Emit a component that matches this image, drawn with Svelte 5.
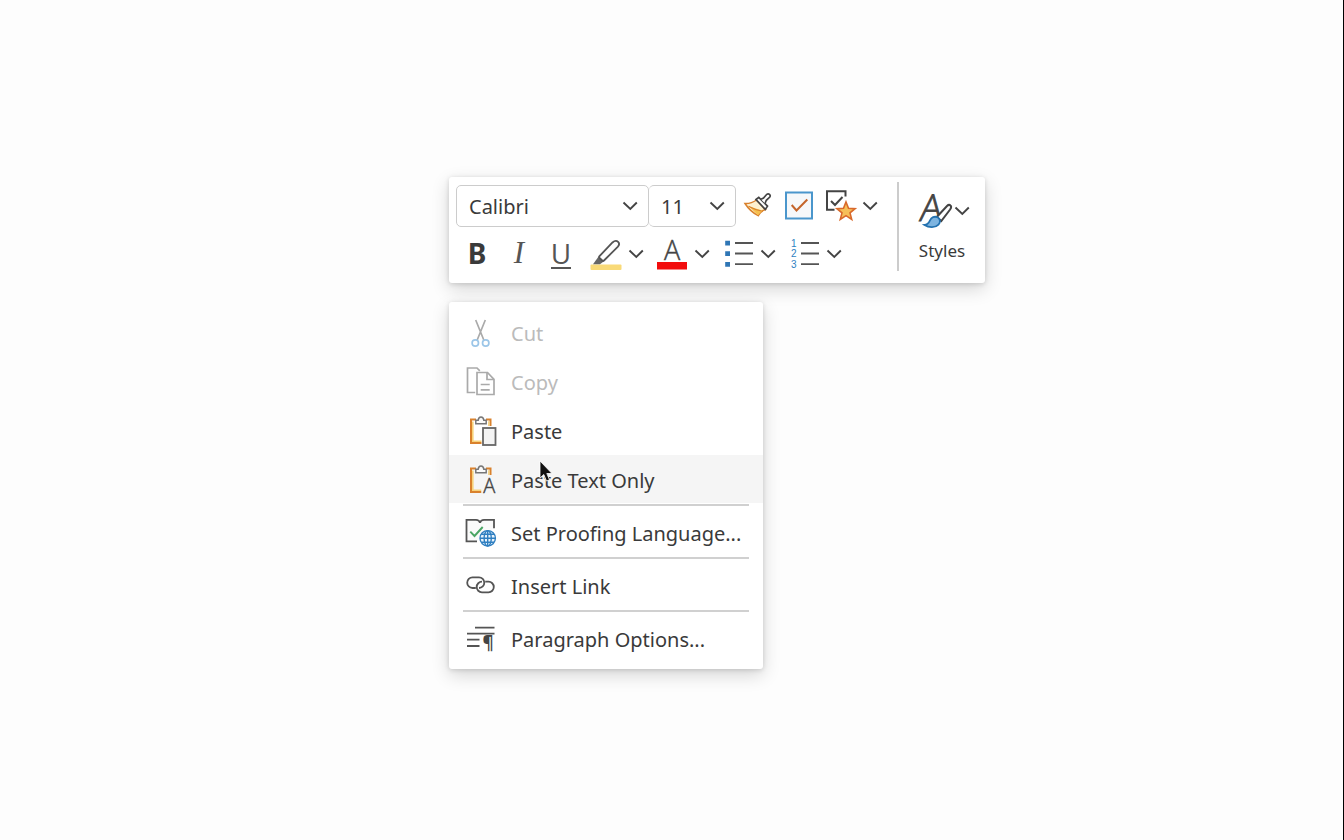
<script>
  let font = $state('Calibri');
  let size = $state('11');
</script>

{#snippet chevron()}
  <svg class="chev" viewBox="0 0 16 10" aria-hidden="true"><path d="M1.500 1.500 8.300 8l6.500-6.500" /></svg>
{/snippet}

{#snippet clipboard()}
  <g class="board">
    <path d="M11 4.500H6V28h10.500" stroke="#d9812d" stroke-width="2" />
    <path d="M7.800 6.500V26.200h8.700" stroke="#f7d27a" stroke-width="1.600" />
    <path d="M21 4.500h4.500V11" stroke="#d9812d" stroke-width="2" />
    <path d="M23.800 6.300V11" stroke="#f7d27a" stroke-width="1.400" />
    <path d="M10.800 8.800V5.200h2.400c.2-2 1.300-3.200 2.800-3.200s2.600 1.200 2.800 3.200h2.400v3.600z" fill="#fafafa" stroke="#777" stroke-width="1.500" />
  </g>
{/snippet}

<main class="page">
  <div class="toolbar" role="toolbar" aria-label="Formatting">
    <div class="tools">
      <div class="line">
        <div class="field font">
          <select aria-label="Font" bind:value={font}>
            <option>Calibri</option>
            <option>Arial</option>
          </select>
          {@render chevron()}
        </div>
        <div class="field size">
          <select aria-label="Font size" bind:value={size}>
            <option>11</option>
            <option>12</option>
          </select>
          {@render chevron()}
        </div>
        <div class="icons">
          <button aria-label="Format painter">
            <svg class="icon" viewBox="0 0 32 32">
              <path d="M3 13.500c4.500.2 8-1 11.500-3.500L23.500 19.500c-3.200 1-6 3.300-7.300 6.200C11.500 23.200 6.500 19 3 13.500z" fill="#fdf0cf" stroke="#d9812d" stroke-width="1.500" />
              <path d="M7 16.500 20.500 20.500l-4.500 4.800z" fill="#f6c04e" />
              <path d="M6.500 16.200c4 2.200 8.500 4 13 4.800" stroke="#d9812d" stroke-width="1.200" />
              <path d="M14 9.500l2.800-2.200 8.700 8.900-2.200 3.200z" fill="#fff" stroke="#444" stroke-width="1.700" />
              <path d="M19 9.300l2.500-1.300 3.300-3.700c1.800-1.400 4.300.6 3 2.700l-3.500 3.300-1.300 3.200" fill="#fff" stroke="#444" stroke-width="1.700" />
            </svg>
          </button>
          <button aria-label="Check box">
            <svg class="icon" viewBox="0 0 32 32">
              <rect x="3" y="2.500" width="26" height="26" fill="#f6f8fa" stroke="#4a96cc" stroke-width="2" />
              <path d="M8.700 15l4.800 5.500L24.300 9.500" stroke="#c4652b" stroke-width="2" />
            </svg>
          </button>
          <div class="split">
            <button aria-label="Favorite tag">
              <svg class="icon" viewBox="0 0 32 32">
                <path d="M21.500 6.500V1.200H3v18.600h7.500" stroke="#444" stroke-width="2" />
                <path d="M7 11l4 4 7.500-8" stroke="#444" stroke-width="2" />
                <path d="M22 12l2.500 6.300 6.600.4-5.100 4.200 1.700 6.500L22 25.700l-5.700 3.700 1.700-6.500-5.100-4.200 6.600-.4z" fill="#f6bf58" stroke="#d9692b" stroke-width="1.600" />
              </svg>
            </button>
            <button class="more" aria-label="More tags">{@render chevron()}</button>
          </div>
        </div>
      </div>

      <div class="line second">
        <button class="letter bold">B</button>
        <button class="letter italic">I</button>
        <button class="letter under"><span>U</span></button>
        <div class="splits">
          <div class="split">
            <button aria-label="Highlight">
              <svg class="icon" viewBox="0 0 32 32">
                <rect x="0.500" y="26.500" width="31" height="5.500" rx="1" fill="#f9da78" />
                <path d="M3 26.200l5.600-7.700 5 5-3.600 2.700z" fill="#666" />
                <path d="M9.500 18.200L22.500 4.500c2.200-2 4.300-1.900 5.600-.6 1.300 1.300 1.300 3.200-.4 5L14 22.500c-.5.500-1.300.5-1.800 0l-2.700-2.600c-.5-.5-.5-1.100 0-1.700z" fill="#fff" stroke="#555" stroke-width="1.800" />
              </svg>
            </button>
            <button class="more" aria-label="Highlight colors">{@render chevron()}</button>
          </div>
          <div class="split">
            <button aria-label="Font color">
              <svg class="icon" viewBox="0 0 32 32">
                <text class="thin" x="16" y="22" font-size="27" text-anchor="middle">A</text>
                <rect x="1" y="24" width="30" height="7.500" fill="#f20d0d" />
              </svg>
            </button>
            <button class="more" aria-label="Font colors">{@render chevron()}</button>
          </div>
          <div class="split">
            <button aria-label="Bullets">
              <svg class="icon" viewBox="0 0 32 32">
                <path d="M3.200 2.800h4.800v4.800H3.200zM3.200 13.300h4.800v4.800H3.200zM3.200 24h4.800v4.800H3.200z" fill="#2f76b5" />
                <path d="M13 5h18M13 15.500h18M13 26.200h18" stroke="#555" stroke-width="1.800" />
              </svg>
            </button>
            <button class="more" aria-label="Bullet styles">{@render chevron()}</button>
          </div>
          <div class="split">
            <button aria-label="Numbering">
              <svg class="icon" viewBox="0 0 32 32">
                <g class="digits"><text x="3" y="8.500">1</text><text x="3" y="19.300">2</text><text x="3" y="30">3</text></g>
                <path d="M13 5h18M13 15.500h18M13 26.200h18" stroke="#555" stroke-width="1.800" />
              </svg>
            </button>
            <button class="more" aria-label="Numbering styles">{@render chevron()}</button>
          </div>
        </div>
      </div>
    </div>

    <button class="styles">
      <span class="stylesicon">
        <svg viewBox="0 0 36 36" aria-hidden="true">
          <text class="thin heavy" transform="skewX(-6)" x="8" y="28" font-size="37">A</text>
          <path d="M36.500 12.500c1.200 1 .6 2.500-.4 4L27.300 28l-4.500-4L33 13c1.200-1.200 2.500-1.400 3.500-.5z" fill="#fff" stroke="#444" stroke-width="2" />
          <path d="M10.500 32c3.500-.3 4.200-2 5.500-4.700 1.300-2.800 4.500-4.500 7.500-3 3 1.600 3.200 5 1 7.300-3.200 3.300-9.500 3.300-14 .4z" fill="#7db4e0" stroke="#2472b0" stroke-width="1.800" />
        </svg>
        {@render chevron()}
      </span>
      <span>Styles</span>
    </button>
  </div>

  <div class="menu" role="menu">
    <button role="menuitem" disabled>
      <svg class="icon" viewBox="0 0 32 32">
        <path d="M10.700 3l8.300 20.500M20.300 3L12 23.500" stroke="#aaa" stroke-width="1.700" />
        <circle cx="10.300" cy="26" r="3.200" stroke="#9cc6e8" stroke-width="1.700" />
        <circle cx="20.700" cy="26" r="3.200" stroke="#9cc6e8" stroke-width="1.700" />
      </svg>
      Cut
    </button>
    <button role="menuitem" disabled>
      <svg class="icon" viewBox="0 0 32 32" stroke="#aaa" stroke-width="1.700">
        <path d="M14.800 4.800L12 2H2.500v24.500h7.700" />
        <path d="M12 6.500h10.500l6.500 6.800v15.200H12z" />
        <path d="M22 6.500v7h7M15.700 18.500h9M15.700 23.800h9" />
      </svg>
      Copy
    </button>
    <button role="menuitem">
      <svg class="icon" viewBox="0 0 32 32">
        {@render clipboard()}
        <rect x="18" y="13" width="12.500" height="17" fill="#f4f4f4" stroke="#666" stroke-width="1.800" />
      </svg>
      Paste
    </button>
    <button role="menuitem" class="active">
      <svg class="icon" viewBox="0 0 32 32">
        {@render clipboard()}
        <rect x="16.500" y="13" width="14" height="17" fill="#f5f5f5" />
        <text class="thin" x="24.200" y="29" font-size="20" text-anchor="middle">A</text>
      </svg>
      Paste Text Only
      <svg class="cursor" viewBox="0 0 14 24" aria-hidden="true">
        <path d="M1 1v17l3.800-3.500L7.500 21l3-1.200-2.700-6.300H13z" fill="#111" stroke="#fff" stroke-width="0.800" />
      </svg>
    </button>
    <hr />
    <button role="menuitem">
      <svg class="icon" viewBox="0 0 32 32">
        <path d="M12 24.300H1.500V2.800H11c2.200 0 3.500 1 4 3 .5-2 1.800-3 4-3h10v8.500" fill="#fafafa" stroke="#555" stroke-width="1.800" />
        <path d="M5.300 14.700l4.200 4.300 8.200-9" stroke="#4aa564" stroke-width="1.900" />
        <circle cx="22.700" cy="21.300" r="8.700" fill="#fff" />
        <g stroke="#2f7fc1" stroke-width="1.400">
          <circle cx="22.700" cy="21.300" r="7.700" fill="#e8f3fb" />
          <ellipse cx="22.700" cy="21.300" rx="3.600" ry="7.700" />
          <path d="M22.700 13.600V29M15 21.300h15.400M16.300 17.300h12.800M16.300 25.300h12.800" />
        </g>
      </svg>
      Set Proofing Language...
    </button>
    <hr />
    <button role="menuitem">
      <svg class="icon" viewBox="0 0 32 32" stroke="#555" stroke-width="1.800">
        <path d="M10.800 18H7.500a5.300 5.300 0 0 1 0-10.600H14a5.300 5.300 0 0 1 0 10.600" />
        <path d="M20.200 11.700h3.300a5.300 5.300 0 0 1 0 10.600H17a5.300 5.300 0 0 1 0-10.600" />
      </svg>
      Insert Link
    </button>
    <hr />
    <button role="menuitem">
      <svg class="icon" viewBox="0 0 32 32">
        <path d="M10 4.700h19.500M2 10.700h27.500M2 16.700h12.500M2 23h12.500" stroke="#555" stroke-width="1.800" />
        <text class="pilcrow" x="23" y="25.500" font-size="17" text-anchor="middle">¶</text>
      </svg>
      Paragraph Options...
    </button>
  </div>
</main>

<style>
  :global(body) {
    margin: 0;
    background: #fdfdfd;
  }
  .page {
    box-sizing: border-box;
    min-height: 100vh;
    padding: 177px 16px 16px 449px;
    border-right: 1px solid #000;
    display: flex;
    flex-direction: column;
    align-items: flex-start;
    gap: 19px;
    font-family: "Noto Sans", "Open Sans", sans-serif;
    font-size: 20px;
    color: #3a3a3a;
  }
  button {
    border: 0;
    padding: 0;
    background: none;
    font: inherit;
    color: inherit;
    display: flex;
    align-items: center;
    justify-content: center;
  }
  svg {
    display: block;
    flex: none;
    fill: none;
    overflow: visible;
  }
  .icon {
    width: 32px;
    height: 32px;
  }
  .chev {
    width: 16px;
    height: 10px;
    stroke: #444;
    stroke-width: 1.9;
  }
  .thin {
    font-family: "Open Sans", "Noto Sans", sans-serif;
    font-weight: 300;
    fill: #444;
    stroke: #444;
    stroke-width: 0.4;
  }
  .heavy {
    stroke-width: 0.8;
  }
  .digits {
    font-family: "Liberation Sans", sans-serif;
    font-size: 10px;
    fill: #2f82c1;
  }
  .pilcrow {
    font-weight: 700;
    fill: #444;
  }
  .toolbar,
  .menu {
    background: #fff;
    border-radius: 3px;
    box-shadow: 0 6px 18px rgba(0, 0, 0, 0.16), 0 1px 5px rgba(0, 0, 0, 0.14);
  }
  .toolbar {
    display: flex;
    padding: 5px 0;
  }
  .tools {
    padding: 3px 19px 4px 7px;
  }
  .line {
    display: flex;
    align-items: center;
    height: 42px;
  }
  .second {
    height: 40px;
    margin-top: 7px;
  }
  .field {
    display: flex;
    align-items: center;
    box-sizing: border-box;
    height: 42px;
    border: 1px solid #ccc;
    border-radius: 5px;
  }
  .field select {
    appearance: none;
    width: 100%;
    height: 40px;
    padding: 0 12px;
    margin-right: -26px;
    border: 0;
    background: none;
    font: inherit;
    color: inherit;
  }
  .field .chev {
    margin-right: 10px;
    pointer-events: none;
  }
  .font {
    width: 193px;
  }
  .size {
    width: 87px;
    border-left: 0;
  }
  .icons {
    display: flex;
    gap: 9px;
    margin-left: 6px;
  }
  .split {
    display: flex;
    gap: 6px;
  }
  .splits {
    display: flex;
    gap: 12px;
    margin-left: 8px;
  }
  .letter {
    width: 42px;
    height: 40px;
    font-size: 28px;
    line-height: 36px;
  }
  .bold {
    font-weight: 700;
    padding-bottom: 3px;
  }
  .italic {
    font-family: "Liberation Serif", serif;
    font-style: italic;
    font-size: 31px;
    color: #555;
    padding-bottom: 2px;
  }
  .under {
    font-family: "Open Sans", sans-serif;
    font-size: 28px;
    color: #555;
  }
  .under span {
    line-height: 28px;
    border-bottom: 2px solid #555;
  }
  .styles {
    width: 88px;
    flex-direction: column;
    justify-content: flex-start;
    gap: 10px;
    padding-top: 11px;
    border-left: 2px solid #ccc;
    margin-bottom: 7px;
    font-size: 17px;
    line-height: 24px;
  }
  .stylesicon {
    display: flex;
    align-items: center;
    gap: 4px;
  }
  .stylesicon svg:first-child {
    width: 36px;
    height: 36px;
  }
  .menu {
    width: 314px;
    box-sizing: border-box;
    padding: 6px 0 7px;
    display: flex;
    flex-direction: column;
    gap: 1px;
  }
  .menu button {
    position: relative;
    height: 48px;
    padding: 2px 16px 0;
    gap: 14px;
    justify-content: flex-start;
    white-space: nowrap;
  }
  .menu button:disabled {
    color: #bbb;
  }
  .menu .active {
    background: #f5f5f5;
  }
  .menu hr {
    width: 286px;
    height: 2px;
    margin: 0 14px 1px;
    border: 0;
    background: #d0d0d0;
  }
  .cursor {
    position: absolute;
    left: 90px;
    top: 5px;
    width: 14px;
    height: 24px;
  }
</style>
